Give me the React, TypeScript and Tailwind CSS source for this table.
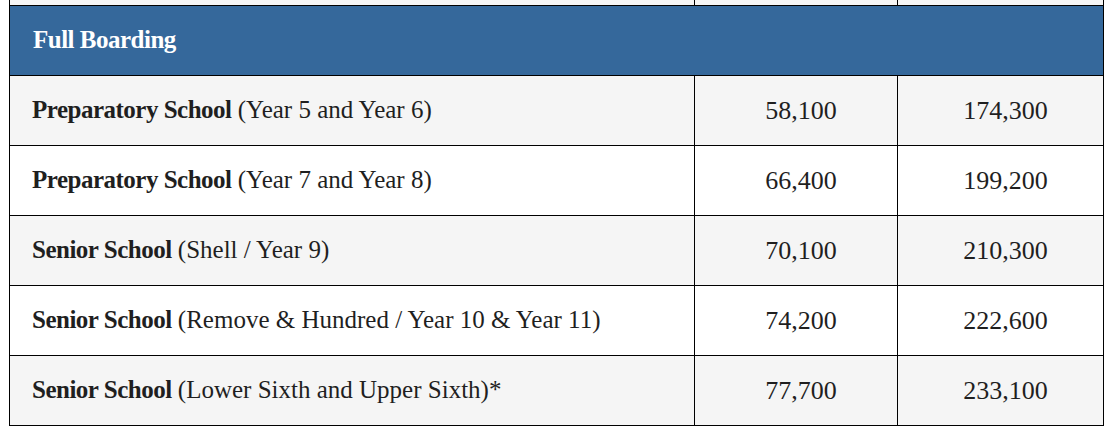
const rows = [
  { name: 'Preparatory School', detail: '(Year 5 and Year 6)', term: '58,100', year: '174,300' },
  { name: 'Preparatory School', detail: '(Year 7 and Year 8)', term: '66,400', year: '199,200' },
  { name: 'Senior School', detail: '(Shell / Year 9)', term: '70,100', year: '210,300' },
  { name: 'Senior School', detail: '(Remove & Hundred / Year 10 & Year 11)', term: '74,200', year: '222,600' },
  { name: 'Senior School', detail: '(Lower Sixth and Upper Sixth)*', term: '77,700', year: '233,100' },
];

export default function App() {
  return (
    <div className="h-[429px] w-[1106px] overflow-hidden bg-white pl-[9px] font-['Liberation_Serif',serif] text-[#1f1f1f]">
      <table className="w-[1094px] table-fixed border-collapse">
        <colgroup>
          <col className="w-[685px]" />
          <col className="w-[203px]" />
          <col className="w-[206px]" />
        </colgroup>
        <tbody>
          {/* tail of the previous row */}
          <tr className="h-[5px] bg-[#f5f5f5]">
            <td className="border-x border-b border-black p-0" />
            <td className="border-x border-b border-black p-0" />
            <td className="border-x border-b border-black p-0" />
          </tr>
          <tr className="h-[70px] bg-[#35689b]">
            <td colSpan={3} className="border border-black pl-[23px] text-[25px] font-bold tracking-[-0.5px] text-white">
              Full Boarding
            </td>
          </tr>
          {rows.map((r, i) => (
            <tr key={i} className={i % 2 === 0 ? 'h-[70px] bg-[#f5f5f5]' : 'h-[70px] bg-white'}>
              <td className="border border-black pl-[22px] text-[25px]">
                <span className="font-bold tracking-[-0.5px]">{r.name}</span> {r.detail}
              </td>
              <td className="border border-black pl-[10px] text-center text-[26px]">{r.term}</td>
              <td className="border border-black pl-[10px] text-center text-[26px]">{r.year}</td>
            </tr>
          ))}
        </tbody>
      </table>
    </div>
  );
}
